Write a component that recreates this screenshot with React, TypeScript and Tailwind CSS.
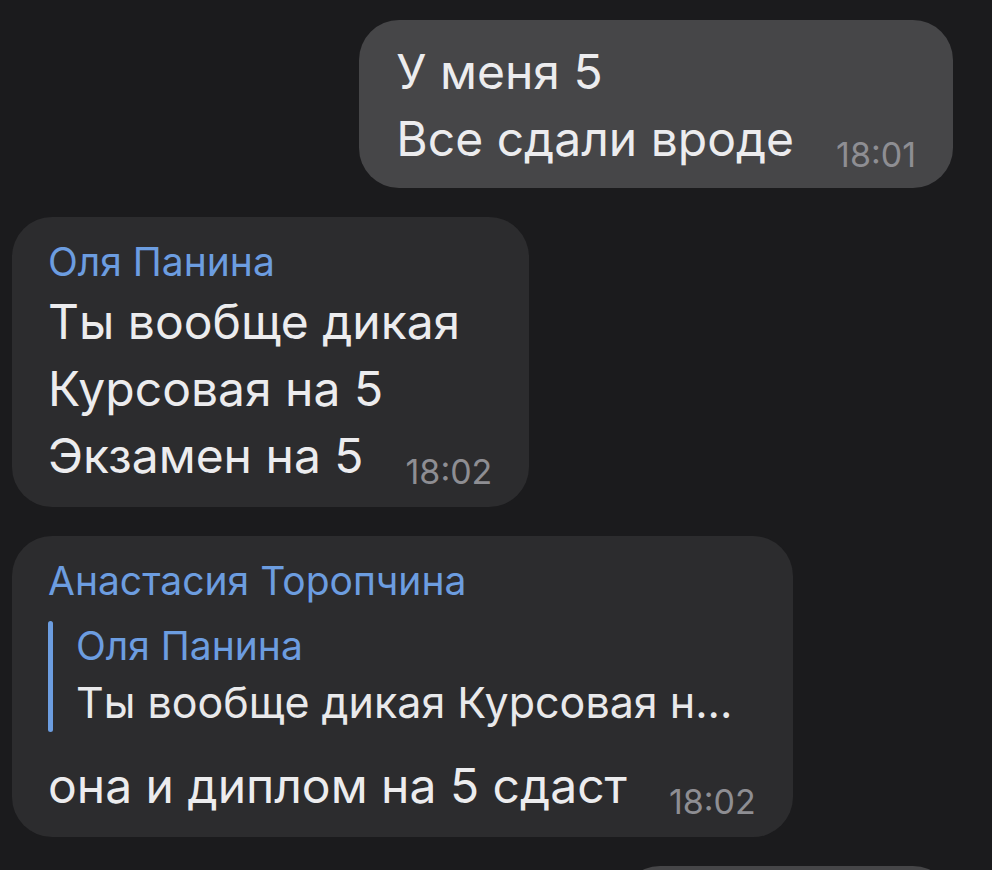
import type { ReactNode } from "react";

type Msg = {
  out?: boolean;
  author?: string;
  reply?: { author: string; text: string };
  lines: string[];
  time: string;
};

const messages: Msg[] = [
  { out: true, lines: ["У меня 5", "Все сдали вроде"], time: "18:01" },
  {
    author: "Оля Панина",
    lines: ["Ты вообще дикая", "Курсовая на 5", "Экзамен на 5"],
    time: "18:02",
  },
  {
    author: "Анастасия Торопчина",
    reply: { author: "Оля Панина", text: "Ты вообще дикая Курсовая н..." },
    lines: ["она и диплом на 5 сдаст"],
    time: "18:02",
  },
];

function Bubble({ out, children }: { out?: boolean; children: ReactNode }) {
  return (
    <div
      className={
        out
          ? "self-end rounded-[40px] bg-[#464648] pl-[37px] pr-[37px] pt-[18px] pb-[16px]"
          : "self-start rounded-[40px] bg-[#2c2c2e] pl-[36px] pr-[37px] pt-[19px] pb-[18px]"
      }
    >
      {children}
    </div>
  );
}

function Message({ msg }: { msg: Msg }) {
  const last = msg.lines[msg.lines.length - 1];
  return (
    <Bubble out={msg.out}>
      {msg.author && (
        <div className="text-[39px] leading-[52px] text-[#6c9de0]">{msg.author}</div>
      )}
      {msg.reply && (
        <div className="mt-[14px] mb-[20px] flex gap-[23px]">
          <div className="w-[5px] rounded-full bg-[#6c9de0]" />
          <div className="-mt-px">
            <div className="text-[39px] leading-[52px] text-[#6c9de0]">{msg.reply.author}</div>
            <div className="text-[43px] leading-[60px] text-[#e9e9eb]">{msg.reply.text}</div>
          </div>
        </div>
      )}
      {msg.lines.slice(0, -1).map((line) => (
        <div key={line} className="text-[48px] leading-[67px] text-[#ececee]">
          {line}
        </div>
      ))}
      <div className="flex items-end">
        <span className="text-[48px] leading-[67px] text-[#ececee]">{last}</span>
        <span className="ml-[42px] text-[34px] leading-[34px] text-[#8e8e93]">{msg.time}</span>
      </div>
    </Bubble>
  );
}

export default function App() {
  return (
    <div
      className="flex h-[870px] w-full flex-col gap-[29px] overflow-hidden bg-[#1b1b1d] pt-5 pl-3 pr-[39px]"
      style={{ fontFamily: "Inter, 'Noto Sans', sans-serif" }}
    >
      {messages.map((m, i) => (
        <Message key={i} msg={m} />
      ))}
      {/* next outgoing bubble, cut off by the bottom edge */}
      <div className="h-[120px] w-[333px] shrink-0 self-end rounded-[40px] bg-[#464648]" />
    </div>
  );
}
